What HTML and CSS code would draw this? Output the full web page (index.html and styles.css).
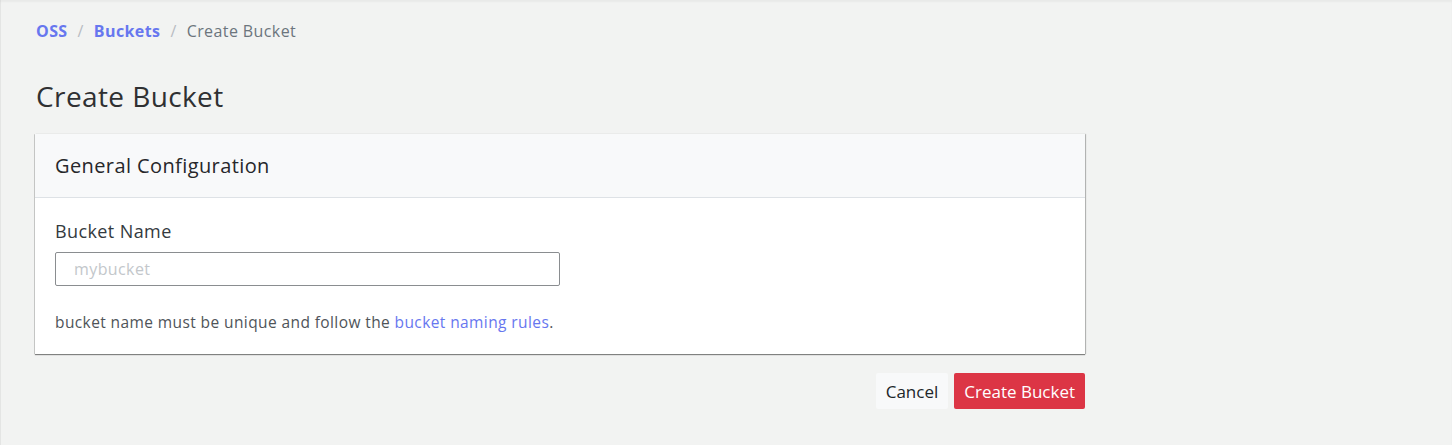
FILE: index.html
```html
<!DOCTYPE html>
<html lang="en">
<head>
<meta charset="utf-8">
<title>Create Bucket</title>
<link rel="stylesheet" href="styles.css">
</head>
<body>
<main class="page">
  <nav class="breadcrumb">
    <a class="crumb-link" href="#">OSS</a>
    <span class="sep">/</span>
    <a class="crumb-link" href="#">Buckets</a>
    <span class="sep">/</span>
    <span class="crumb-current">Create Bucket</span>
  </nav>
  <h1 class="page-title">Create Bucket</h1>
  <section class="card">
    <header class="card-header">
      <h2 class="card-title">General Configuration</h2>
    </header>
    <div class="card-body">
      <label class="field-label" for="bucket">Bucket Name</label>
      <input class="field-input" id="bucket" type="text" placeholder="mybucket">
      <p class="help">bucket name must be unique and follow the <a class="help-link" href="#">bucket naming rules</a>.</p>
    </div>
  </section>
  <div class="actions">
    <button class="btn btn-light" type="button">Cancel</button>
    <button class="btn btn-danger" type="button">Create Bucket</button>
  </div>
</main>
</body>
</html>
```

FILE: styles.css
```css
* { box-sizing: border-box; }
html, body { height: 100%; }
body {
  margin: 0;
  background: #f2f3f2;
  font-family: "Open Sans", Lato, sans-serif;
  letter-spacing: 0.025em;
  color: #34395e;
  box-shadow: inset 0 2px 2px rgba(0,0,0,0.04), inset 1px 0 0 #e6e7e6;
}
.page {
  width: 1050px;
  margin-left: 35px;
  padding-top: 19px;
}
.breadcrumb {
  display: flex;
  align-items: center;
  gap: 10px;
  font-size: 16px;
  line-height: 24px;
  padding-left: 1px;
}
.crumb-link {
  color: #6777ef;
  font-weight: 700;
  text-decoration: none;
}
.sep { color: #b8bcc2; }
.crumb-current { color: #6c757d; }
.page-title {
  margin: 36px 0 0 1px;
  font-size: 28px;
  font-weight: 400;
  line-height: 34px;
  color: #2f3032;
}
.card {
  margin-top: 21px;
  background: #fff;
  box-shadow: 0 1px 1px rgba(0,0,0,0.45), 1px 0 1px rgba(0,0,0,0.2), -1px 0 0 rgba(0,0,0,0.12);
}
.card-header {
  height: 64px;
  display: flex;
  align-items: center;
  padding: 0 20px;
  background: #f8f9fa;
  border-bottom: 1px solid #dee2e6;
}
.card-title {
  margin: 0;
  font-size: 20px;
  font-weight: 500;
  color: #26272a;
}
.card-body {
  padding: 21px 20px 22px;
}
.field-label {
  display: block;
  font-size: 18px;
  line-height: 24px;
  color: #343a40;
}
.field-input {
  display: block;
  width: 505px;
  height: 34px;
  margin-top: 9px;
  padding: 0 18px;
  border: 1px solid #8a8d90;
  border-radius: 2px;
  font-family: inherit;
  letter-spacing: inherit;
  font-size: 16px;
  color: #495057;
  background: #fff;
}
.field-input::placeholder { color: #c3c7cb; }
.help {
  margin: 26px 0 0;
  font-size: 15.5px;
  line-height: 20px;
  color: #4f5459;
}
.help-link {
  color: #6777ef;
  text-decoration: none;
}
.actions {
  display: flex;
  justify-content: flex-end;
  gap: 6px;
  margin-top: 19px;
}
.btn {
  height: 36px;
  padding: 0 10px;
  border: 0;
  border-radius: 2px;
  font-family: inherit;
  letter-spacing: 0;
  font-size: 17px;
}
.btn-light { background: #f8f9fa; color: #212529; }
.btn-danger { background: #dc3545; color: #fff; }
```
